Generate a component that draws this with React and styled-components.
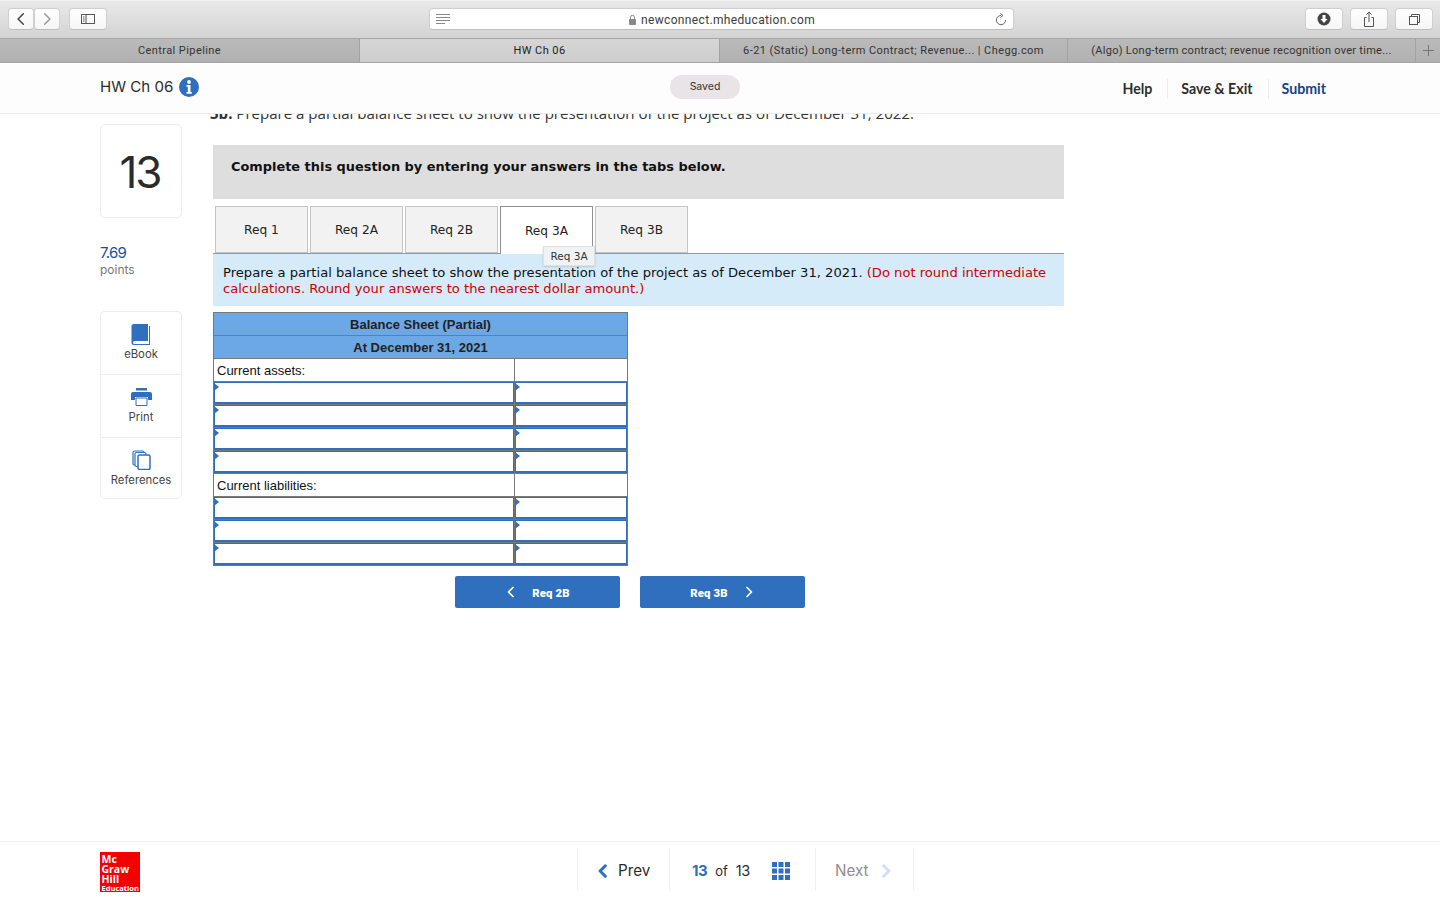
import React from "react";
import styled, { createGlobalStyle } from "styled-components";

const Global = createGlobalStyle`
  html, body { margin: 0; padding: 0; background: #fff; }
  * { box-sizing: border-box; }
  body { font-family: "Open Sans", "Liberation Sans", sans-serif; color: #222; }
`;
const Page = styled.div`
  width: 1440px; height: 900px; display: flex; flex-direction: column; overflow: hidden; background: #fff;
`;
const Toolbar = styled.div`
  height: 38px; flex: none; display: flex; align-items: flex-start; padding: 8px 7px 0 8px;
  background: linear-gradient(#e9e9e9, #d3d3d3); border-top: 1px solid #f0f0f0;
`;
const ChromeBtn = styled.div`
  width: ${p => p.$w || 38}px; height: 22px; margin-top: -1px; margin-left: ${p => p.$ml || 0}px;
  display: flex; align-items: center; justify-content: center; flex: none;
  background: linear-gradient(#ffffff, #f6f6f6); border: 1px solid #cfcfcf; border-bottom-color: #bdbdbd; border-radius: 4px;
`;
const UrlBar = styled.div`
  width: 585px; height: 22px; margin: -1px 0 0 322px; flex: none; display: flex; align-items: center;
  padding: 0 6px; background: #fff; border: 1px solid #cfcfcf; border-bottom-color: #bdbdbd; border-radius: 4px;
`;
const UrlText = styled.div`
  flex: 1; display: flex; align-items: center; justify-content: center; gap: 4px; padding: 1px 2px 0 0;
  font: 12px "Roboto", "Liberation Sans", sans-serif; letter-spacing: 0.35px; color: #3c3c3c;
`;
const TabBar = styled.div`
  height: 25px; flex: none; display: flex; background: linear-gradient(#bababa, #b1b1b1);
  border-top: 1px solid #a6a6a6; border-bottom: 1px solid #a3a3a3;
`;
const BrowserTab = styled.div`
  width: ${p => p.$w}px; flex: none; display: flex; align-items: center; justify-content: center;
  font: 11px "Roboto", "Liberation Sans", sans-serif; letter-spacing: ${p => p.$ls || 0.42}px;
  color: ${p => (p.$active ? "#1d1d1d" : "#333")};
  background: ${p => (p.$active ? "linear-gradient(#d6d6d6, #cdcdcd)" : "transparent")};
  border-right: 1px solid #a3a3a3;
`;
const PlusTab = styled.div`
  flex: 1; display: flex; align-items: center; justify-content: center; color: #777;
`;
const Header = styled.header`
  height: 51px; flex: none; display: flex; align-items: center; padding: 0 99px 0 100px;
  background: #fdfdfd; border-bottom: 1px solid #ececec; position: relative; z-index: 2;
`;
const TitleWrap = styled.div`
  width: 570px; flex: none; display: flex; align-items: center; gap: 6px; margin-top: -3px;
`;
const Title = styled.span`
  font: 400 15.1px "Inter", "Liberation Sans", sans-serif; color: #2b2b2b;
`;
const SavedPill = styled.div`
  width: 70px; height: 24px; border-radius: 12px; background: #e8e4e8; margin-top: -3px;
  display: flex; align-items: center; justify-content: center; font: 400 10.5px "Inter", sans-serif; color: #333;
`;
const HeaderLinks = styled.nav`
  margin-left: auto; display: flex; align-items: center; margin-top: 1px;
`;
const HeaderLink = styled.a`
  font: 700 14.2px "Lato", "Inter", sans-serif; color: ${p => (p.$blue ? "#14438a" : "#2d2d2d")};
  padding: 0 15px 0 13px; height: 20px; line-height: 20px;
  border-left: ${p => (p.$first ? "none" : "1px solid #ececec")};
`;
const Main = styled.main`
  flex: 1; display: flex; overflow: hidden; padding-left: 100px; min-height: 0;
`;
const Side = styled.aside`
  width: 82px; flex: none; padding-top: 10px;
`;
const NumberCard = styled.div`
  height: 94px; border: 1px solid #ececec; border-radius: 5px; display: flex; align-items: center; justify-content: center;
  padding: 2px 2px 0 0;
  font: 400 44px "Inter", sans-serif; letter-spacing: -2px; color: #2b2b2b;
`;
const Points = styled.div`
  margin-top: 26px; font: 400 15px/18px "Inter", sans-serif; letter-spacing: -0.8px; color: #1c4f98;
`;
const PointsLabel = styled.div`
  font: 400 12px/16px "Inter", sans-serif; color: #777;
`;
const Tools = styled.div`
  margin-top: 33px; display: flex; flex-direction: column;
`;
const Tool = styled.div`
  height: ${p => p.$h}px; display: flex; flex-direction: column; align-items: center; padding-top: ${p => p.$pt}px;
  border: 1px solid #ececec; border-bottom: ${p => (p.$last ? "1px solid #ececec" : "none")};
  border-radius: ${p => (p.$first ? "5px 5px 0 0" : p.$last ? "0 0 5px 5px" : "0")};
  font: 400 11.3px/14px "Inter", sans-serif; color: #444; gap: ${p => p.$gap}px;
`;
const Question = styled.section`
  width: 851px; margin-left: 31px; flex: none;
`;
const ClippedLine = styled.div`
  margin: -11px 0 0 -3px; height: 28px; white-space: nowrap;
  font: 400 15.05px/20px "Open Sans", sans-serif; color: #333;
  b { font-weight: 700; }
`;
const Banner = styled.div`
  height: 54px; margin-top: 14px; padding: 11px 18px; background: #dedede;
  font: 700 12.92px/22px "DejaVu Sans", sans-serif; color: #111;
`;
const Tabs = styled.div`
  height: 48px; margin-top: 7px; padding-left: 2px; display: flex; gap: 2px; border-bottom: 1px solid #8f9aa5; position: relative;
`;
const ReqTab = styled.div`
  width: 93px; height: ${p => (p.$active ? 48 : 47)}px; position: relative; display: flex; align-items: center; justify-content: center;
  padding-top: ${p => (p.$active ? 0 : 1)}px;
  font: 400 12.2px "DejaVu Sans", sans-serif; color: #222;
  background: ${p => (p.$active ? "#fff" : "#f2f2f2")};
  border: 1px solid ${p => (p.$active ? "#8f8f8f" : "#c4c4c4")};
  border-bottom: ${p => (p.$active ? "none" : "1px solid #c4c4c4")};
  z-index: ${p => (p.$active ? 1 : 0)};
`;
const Tip = styled.div`
  position: absolute; left: 42px; top: 39px; width: 52px; height: 20px; display: flex; align-items: center; justify-content: center;
  background: #f0f3f5; border: 1px solid #e0e0e0; box-shadow: 0 1px 2px rgba(0,0,0,.15);
  font: 400 10.5px "DejaVu Sans", sans-serif; color: #333; z-index: 3;
`;
const Instruction = styled.div`
  height: 52px; padding: 11px 10px 0; background: #d5ebfa;
  font: 400 13.1px/16px "DejaVu Sans", sans-serif; color: #111; white-space: nowrap;
`;
const Red = styled.span`color: #cc0000;`;
const Sheet = styled.div`
  width: 415px; margin-top: 6px; border: 1px solid #777;
  font: 400 13px "Liberation Sans", sans-serif; color: #111;
`;
const HeadRow = styled.div`
  height: 23px; display: flex; align-items: center; justify-content: center; padding-top: 1px; background: #6ca8e6;
  border-bottom: 1px solid #7a7a7a; font-weight: 700; color: #222;
`;
const Row = styled.div`
  height: 23px; display: grid; grid-template-columns: 301px 1fr;
`;
const InputRow = styled(Row)`
  background: #777; padding-bottom: 1px; column-gap: 0;
  &:last-child { height: 22px; padding-bottom: 0; }
`;
const LabelCell = styled.div`
  display: flex; align-items: center; padding: 1px 0 0 3px;
  border-bottom: 1px solid #7a7a7a; border-right: ${p => (p.$label ? "1px solid #7a7a7a" : "none")};
`;
const InputCell = styled.div`
  position: relative; background: #fff; border: 1px solid #2f6fbd; border-bottom-width: 2px;
  margin-right: ${p => (p.$first ? 1 : 0)}px;
  &::before {
    content: ""; position: absolute; left: -1px; top: 0; border-left: 5px solid #2f6fbd;
    border-top: 4px solid transparent; border-bottom: 4px solid transparent;
  }
`;
const NavRow = styled.div`
  margin-top: 10px; padding-left: 242px; display: flex; gap: 20px;
`;
const NavBtn = styled.div`
  width: 165px; height: 32px; border-radius: 2px; background: #2f6fbd; color: #fff;
  display: flex; align-items: center; justify-content: center; gap: 15px; padding-top: 2px;
  font: 900 11.3px "Roboto", sans-serif; letter-spacing: 0.2px;
  svg { margin-top: -2px; }
`;
const Footer = styled.footer`
  height: 59px; flex: none; border-top: 1px solid #f0f0f0; padding: 10px 0 0 100px; display: flex; background: #fff;
`;
const Logo = styled.div`
  width: 40px; height: 40px; background: #f40000; color: #fff; padding: 2px 0 0 1.5px; flex: none;
  font: 700 10.5px/10px "Open Sans", sans-serif;
`;
const LogoSmall = styled.div`
  font: 700 7.5px/8px "Open Sans", sans-serif; white-space: nowrap;
`;
const Pager = styled.div`
  margin-left: 437px; display: flex; height: 43px; margin-top: -4px;
  border-left: 1px solid #f0f0f0; border-right: 1px solid #f0f0f0;
`;
const PagerCell = styled.div`
  width: ${p => p.$w}px; display: flex; align-items: center; padding-left: ${p => p.$pl}px; padding-top: 2px;
  border-left: ${p => (p.$first ? "none" : "1px solid #f0f0f0")};
  font: 400 15.2px "Inter", sans-serif; color: ${p => (p.$muted ? "#8d8d8d" : "#2b2b2b")};
`;
const PagerLabel = styled.span`
  margin-left: ${p => p.$ml}px; display: flex;
`;
const Current = styled.b`
  color: #2f6fbd; font: 700 15px "Inter", sans-serif; letter-spacing: -0.5px;
`;
const Of = styled.span`
  font: 400 13px "Inter", sans-serif; margin: 0 8px 0 8px;
`;
const Total = styled.span`
  font: 400 14.5px "Inter", sans-serif; letter-spacing: -0.3px;
`;
const GridIcon = styled.svg`
  margin-left: 22px;
`;

const Chev = ({ dir = "left", color = "#555", size = 12, w = 1.3 }) => (
  <svg width={size} height={size} viewBox="0 0 12 12" fill="none" stroke={color} strokeWidth={w} strokeLinecap="round" strokeLinejoin="round">
    <path d={dir === "left" ? "M8 1.5 3.5 6 8 10.5" : "M4 1.5 8.5 6 4 10.5"} />
  </svg>
);

const rows = (n) => Array.from({ length: n }, (_, i) => (
  <InputRow key={i}><InputCell $first /><InputCell /></InputRow>
));

export default function App() {
  return (
    <Page>
      <Global />
      <Toolbar>
        <ChromeBtn $w={26}><Chev size={14} color="#444" /></ChromeBtn>
        <ChromeBtn $w={26}><Chev dir="right" size={14} color="#999" /></ChromeBtn>
        <ChromeBtn $w={38} $ml={9}>
          <svg width="16" height="12" viewBox="0 0 16 12" fill="none" stroke="#555"><rect x="1.5" y="1.5" width="13" height="9" /><path d="M6 1.5v9M3 4h1.5M3 6h1.5M3 8h1.5" /></svg>
        </ChromeBtn>
        <UrlBar>
          <svg width="14" height="10" viewBox="0 0 14 10" stroke="#888"><path d="M0 .5h14M0 3.5h14M0 6.5h14M0 9.5h9" /></svg>
          <UrlText>
            <svg width="9" height="11" viewBox="0 0 9 11"><rect x="1" y="5" width="7" height="6" rx="1" fill="#888" /><path d="M2.5 5V3.3a2 2 0 0 1 4 0V5" fill="none" stroke="#888" /></svg>
            newconnect.mheducation.com
          </UrlText>
          <svg width="12" height="13" viewBox="0 0 12 13" fill="none" stroke="#666"><path d="M6 2.5a4.6 4.6 0 1 0 4.6 4.6" /><path d="M5.5 .5 8 2.5 5.5 4.5" /></svg>
        </UrlBar>
        <ChromeBtn $ml={291}>
          <svg width="14" height="14" viewBox="0 0 14 14"><circle cx="7" cy="7" r="6.5" fill="#444" /><path d="M5.5 3h3v4h2L7 11 3.500 7h2z" fill="#fff" /></svg>
        </ChromeBtn>
        <ChromeBtn $ml={7}>
          <svg width="12" height="17" viewBox="0 0 12 17" fill="none" stroke="#555"><path d="M3.500 6.500H1.500v9h9v-9H8.500M6 11V1M3.500 3.500 6 1l2.500 2.500" /></svg>
        </ChromeBtn>
        <ChromeBtn $ml={7}>
          <svg width="13" height="13" viewBox="0 0 13 13" fill="none" stroke="#555"><rect x="1.500" y="3.500" width="8" height="8" /><path d="M3.500 3.500v-2h8v8h-2" /></svg>
        </ChromeBtn>
      </Toolbar>
      <TabBar>
        <BrowserTab $w={360}>Central Pipeline</BrowserTab>
        <BrowserTab $w={360} $active>HW Ch 06</BrowserTab>
        <BrowserTab $w={348}>6-21 (Static) Long-term Contract; Revenue... | Chegg.com</BrowserTab>
        <BrowserTab $w={348} $ls={0.27}>(Algo) Long-term contract; revenue recognition over time...</BrowserTab>
        <PlusTab>
          <svg width="11" height="11" viewBox="0 0 11 11" stroke="#777"><path d="M5.500 0v11M0 5.500h11" /></svg>
        </PlusTab>
      </TabBar>
      <Header>
        <TitleWrap>
          <Title>HW Ch 06</Title>
          <svg width="20" height="20" viewBox="0 0 20 20"><circle cx="10" cy="10" r="10" fill="#2f6fbd" /><circle cx="10" cy="5" r="1.900" fill="#fff" /><path d="M7.500 8h4v7h1.300v1.800H7.500V15h1.300v-5.200H7.500z" fill="#fff" /></svg>
        </TitleWrap>
        <SavedPill>Saved</SavedPill>
        <HeaderLinks>
          <HeaderLink $first>Help</HeaderLink>
          <HeaderLink>Save &amp; Exit</HeaderLink>
          <HeaderLink $blue>Submit</HeaderLink>
        </HeaderLinks>
      </Header>
      <Main>
        <Side>
          <NumberCard>13</NumberCard>
          <Points>7.69</Points>
          <PointsLabel>points</PointsLabel>
          <Tools>
            <Tool $h={63} $pt={12} $gap={1} $first>
              <svg width="20" height="22" viewBox="0 0 20 22"><path d="M3 0h14v17H3.500a1.500 1.500 0 0 0 0 3H18V2h1v19H3a2.500 2.500 0 0 1-2.500-2.500V2.500A2.500 2.500 0 0 1 3 0z" fill="#2f6fbd" /></svg>
              eBook
            </Tool>
            <Tool $h={63} $pt={13} $gap={4}>
              <svg width="21" height="18" viewBox="0 0 21 18"><rect x="5" y="0" width="11" height="2.500" fill="#2f6fbd" /><path d="M2 4h17a2 2 0 0 1 2 2v6h-4V9H4v3H0V6a2 2 0 0 1 2-2z" fill="#2f6fbd" /><path d="M5 10h11v7.500H5z" fill="#fff" stroke="#2f6fbd" /></svg>
              Print
            </Tool>
            <Tool $h={62} $pt={12} $gap={3} $last>
              <svg width="19" height="20" viewBox="0 0 19 20" fill="#fff" stroke="#2f6fbd" strokeWidth="1.200"><rect x="1" y="1" width="11" height="14" rx="1.500" /><rect x="3" y="2.500" width="11" height="14" rx="1.500" /><rect x="6" y="5" width="12" height="14.500" rx="1.500" strokeWidth="1.500" /></svg>
              References
            </Tool>
          </Tools>
        </Side>
        <Question>
          <ClippedLine><b>3b.</b> Prepare a partial balance sheet to show the presentation of the project as of December 31, 2022.</ClippedLine>
          <Banner>Complete this question by entering your answers in the tabs below.</Banner>
          <Tabs>
            <ReqTab>Req 1</ReqTab>
            <ReqTab>Req 2A</ReqTab>
            <ReqTab>Req 2B</ReqTab>
            <ReqTab $active>Req 3A<Tip>Req 3A</Tip></ReqTab>
            <ReqTab>Req 3B</ReqTab>
          </Tabs>
          <Instruction>
            Prepare a partial balance sheet to show the presentation of the project as of December 31, 2021. <Red>(Do not round intermediate<br />calculations. Round your answers to the nearest dollar amount.)</Red>
          </Instruction>
          <Sheet>
            <HeadRow>Balance Sheet (Partial)</HeadRow>
            <HeadRow>At December 31, 2021</HeadRow>
            <Row><LabelCell $label>Current assets:</LabelCell><LabelCell /></Row>
            {rows(4)}
            <Row><LabelCell $label>Current liabilities:</LabelCell><LabelCell /></Row>
            {rows(3)}
          </Sheet>
          <NavRow>
            <NavBtn><Chev color="#fff" size={12} w={1.700} />Req 2B</NavBtn>
            <NavBtn>Req 3B<Chev dir="right" color="#fff" size={12} w={1.700} /></NavBtn>
          </NavRow>
        </Question>
      </Main>
      <Footer>
        <Logo>
          Mc<br />Graw<br />Hill
          <LogoSmall>Education</LogoSmall>
        </Logo>
        <Pager>
          <PagerCell $w={91} $pl={18} $first>
            <Chev color="#2f6fbd" size={14} w={2.600} />
            <PagerLabel $ml={8}>Prev</PagerLabel>
          </PagerCell>
          <PagerCell $w={146} $pl={22}>
            <Current>13</Current><Of>of</Of><Total>13</Total>
            <GridIcon width="18" height="18" viewBox="0 0 18 18" fill="#2f6fbd">
              {[0, 6.500, 13].flatMap(x => [0, 6.500, 13].map(y => <rect key={`${x}-${y}`} x={x} y={y} width="5" height="5" />))}
            </GridIcon>
          </PagerCell>
          <PagerCell $w={98} $pl={19} $muted>
            Next
            <PagerLabel $ml={10}><Chev dir="right" color="#cfe0f3" size={14} w={2.600} /></PagerLabel>
          </PagerCell>
        </Pager>
      </Footer>
    </Page>
  );
}
